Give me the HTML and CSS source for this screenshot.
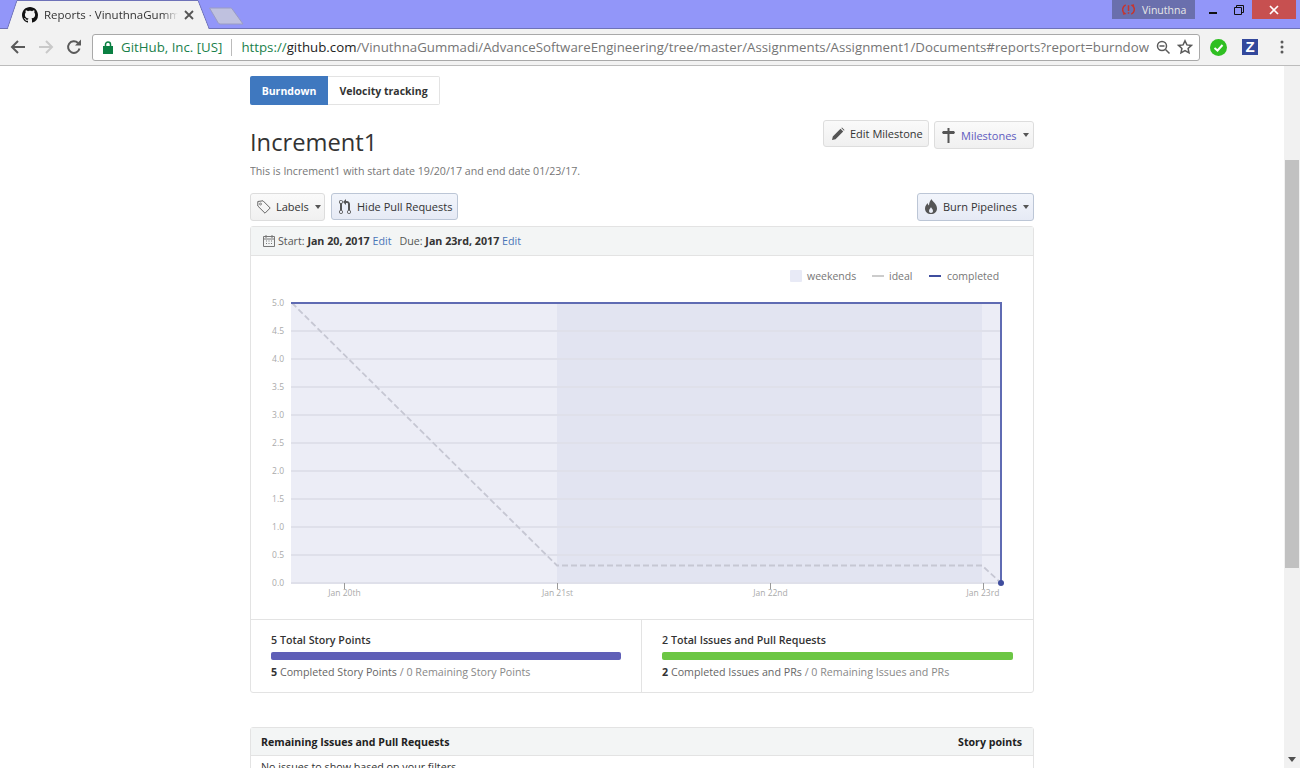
FILE: index.html
```html
<!DOCTYPE html>
<html lang="en">

<head>
    <meta charset="UTF-8">
    <meta name="viewport" content="width=device-width, initial-scale=1.0">
    <title>Reports</title>
    <link rel="stylesheet" href="styles.css">
</head>

<body>
    <!-- Browser window -->
    <header class="tabstrip">
        <div class="tab">
            <svg class="tab-shape" width="206" height="29" viewBox="0 0 206 29">
                <path d="M0 28.5h1.5L11 .5h181l11 28h3" fill="#f2f2f2" stroke="#6e72b8" />
                <path d="M2 29L11.5 1h180l11 28z" fill="#f2f2f2" />
            </svg>
            <svg class="favicon" width="16" height="16" viewBox="0 0 16 16">
                <path fill="#111" d="M8 0C3.58 0 0 3.58 0 8c0 3.54 2.29 6.53 5.47 7.59.4.07.55-.17.55-.38 0-.19-.01-.82-.01-1.49-2.01.37-2.53-.49-2.69-.94-.09-.23-.48-.94-.82-1.13-.28-.15-.68-.52-.01-.53.63-.01 1.08.58 1.23.82.72 1.21 1.87.87 2.33.66.07-.52.28-.87.51-1.07-1.78-.2-3.64-.89-3.64-3.95 0-.87.31-1.59.82-2.15-.08-.2-.36-1.02.08-2.12 0 0 .67-.21 2.2.82.64-.18 1.32-.27 2-.27.68 0 1.36.09 2 .27 1.53-1.04 2.2-.82 2.2-.82.44 1.1.16 1.92.08 2.12.51.56.82 1.27.82 2.15 0 3.07-1.87 3.75-3.65 3.95.29.25.54.73.54 1.48 0 1.07-.01 1.93-.01 2.2 0 .21.15.46.55.38A8.013 8.013 0 0016 8c0-4.42-3.58-8-8-8z" />
            </svg>
            <span class="tab-title">Reports · VinuthnaGumm</span>
            <svg class="tab-close" width="10" height="10" viewBox="0 0 10 10">
                <path d="M1 1l8 8M9 1L1 9" stroke="#555" stroke-width="1.8" />
            </svg>
        </div>
        <svg class="new-tab" width="36" height="18" viewBox="0 0 36 18">
            <path d="M.5 1h21a2 2 0 0 1 1.700 1l10.800 15H11a2 2 0 0 1-1.700-1z" fill="#bfc1df" stroke="#9a9cc4" />
        </svg>
        <div class="window-side">
            <div class="profile">
                <svg width="13" height="13" viewBox="0 0 14 14">
                    <path d="M4 2a5.500 5.500 0 0 0-1 9.500L1 12M10 12a5.500 5.500 0 0 0 1-9.500L13 2" fill="none" stroke="#c8342c" stroke-width="1.600" />
                    <path d="M7 2.500v6M7 10v1.500" stroke="#c8342c" stroke-width="1.600" />
                </svg>
                <span>Vinuthna</span>
            </div>
            <div class="win-btn">
                <svg width="10" height="10" viewBox="0 0 10 10">
                    <path d="M1 8h8" stroke="#111" stroke-width="2" />
                </svg>
            </div>
            <div class="win-btn">
                <svg width="10" height="10" viewBox="0 0 10 10">
                    <path d="M.5 2.500h7v7h-7zM2.500 2.500v-2h7v7h-2" fill="none" stroke="#111" />
                </svg>
            </div>
            <div class="win-btn win-close">
                <svg width="10" height="10" viewBox="0 0 10 10">
                    <path d="M1 1l8 8M9 1L1 9" stroke="#fff" stroke-width="1.700" />
                </svg>
            </div>
        </div>
    </header>

    <nav class="toolbar">
        <svg class="nav-icon" width="16" height="16" viewBox="0 0 16 16">
            <path d="M15 8H2M8 2L2 8l6 6" fill="none" stroke="#5a5a5a" stroke-width="2" />
        </svg>
        <svg class="nav-icon" width="16" height="16" viewBox="0 0 16 16">
            <path d="M1 8h13M8 2l6 6-6 6" fill="none" stroke="#c9c9c9" stroke-width="2" />
        </svg>
        <svg class="nav-icon" width="16" height="16" viewBox="0 0 16 16">
            <path d="M13.500 9.500A5.800 5.800 0 1 1 12 4" fill="none" stroke="#5a5a5a" stroke-width="2" />
            <path d="M9 6.500h6v-6z" fill="#5a5a5a" />
        </svg>
        <div class="omnibox">
            <svg width="10" height="13" viewBox="0 0 10 13">
                <path d="M2.500 5V3.500a2.500 2.500 0 0 1 5 0V5" fill="none" stroke="#0b8043" stroke-width="1.500" />
                <rect y="5" width="10" height="8" fill="#0b8043" />
            </svg>
            <span class="secure">GitHub, Inc. [US]</span>
            <span class="url"><span class="scheme">https://</span><span class="host">github.com</span>/VinuthnaGummadi/AdvanceSoftwareEngineering/tree/master/Assignments/Assignment1/Documents#reports?report=burndow</span>
            <svg width="15" height="15" viewBox="0 0 15 15">
                <circle cx="6" cy="6" r="4.500" fill="none" stroke="#5a5a5a" stroke-width="1.500" />
                <path d="M3.500 6h5M9.500 9.500l4 4" stroke="#5a5a5a" stroke-width="1.500" />
            </svg>
            <svg width="16" height="16" viewBox="0 0 16 16">
                <path d="M8 1.800l1.900 4.100 4.500.5-3.300 3 .9 4.400L8 11.600l-4 2.200.9-4.400-3.300-3 4.500-.5z" fill="none" stroke="#5a5a5a" stroke-width="1.500" />
            </svg>
        </div>
        <svg class="ext-check" width="17" height="17" viewBox="0 0 17 17">
            <circle cx="8.500" cy="8.500" r="8.500" fill="#2fbf22" />
            <path d="M4.500 9l3 2.500 5-5.500" fill="none" stroke="#fff" stroke-width="2" />
        </svg>
        <span class="ext-z">Z</span>
        <svg class="ext-menu" width="4" height="14" viewBox="0 0 4 14">
            <circle cx="2" cy="2" r="1.500" fill="#5a5a5a" />
            <circle cx="2" cy="7" r="1.500" fill="#5a5a5a" />
            <circle cx="2" cy="12" r="1.500" fill="#5a5a5a" />
        </svg>
    </nav>

    <!-- Page -->
    <div class="viewport">
        <main class="page">
            <div class="report-tabs">
                <a class="report-tab report-tab-active">Burndown</a>
                <a class="report-tab">Velocity tracking</a>
            </div>

            <div class="title-row">
                <h1>Increment1</h1>
                <div class="title-actions">
                    <button class="btn btn-edit">
                        <svg width="14" height="14" viewBox="0 0 14 14">
                            <path d="M1 13l.8-3.500L9.500 1.800l2.700 2.700-7.700 7.700zM10.300 1l.7-.5 2.500 2.500-.5.700z" fill="#555" />
                        </svg>
                        Edit Milestone
                    </button>
                    <button class="btn btn-milestones">
                        <svg width="13" height="15" viewBox="0 0 13 15">
                            <path d="M5.500 0h2v3H12l1 1.500L12 6H7.500v9h-2V6H1L0 4.500 1 3h4.500z" fill="#555" />
                        </svg>
                        <span class="link-text">Milestones</span>
                        <i class="caret"></i>
                    </button>
                </div>
            </div>
            <p class="description">This is Increment1 with start date 19/20/17 and end date 01/23/17.</p>

            <div class="filter-row">
                <button class="btn btn-labels">
                    <svg width="14" height="14" viewBox="0 0 14 14">
                        <path d="M.8 1.500l5.200-.7 7.200 7.200-5.200 5.200L.8 6z" fill="none" stroke="#666" />
                        <circle cx="3.500" cy="4" r="1" fill="none" stroke="#666" stroke-width=".8" />
                    </svg>
                    Labels
                    <i class="caret"></i>
                </button>
                <button class="btn btn-active btn-pulls">
                    <svg width="12" height="16" viewBox="0 0 12 16">
                        <path fill="#555" d="M11 11.280V5c-.03-.78-.34-1.470-.94-2.060C9.460 2.350 8.780 2.030 8 2H7V0L4 3l3 3V4h1c.27.02.48.11.69.31.21.2.3.42.31.69v6.280A1.993 1.993 0 0010 15a1.993 1.993 0 001-3.720zm-1 2.920c-.66 0-1.200-.55-1.200-1.200 0-.65.55-1.200 1.200-1.200.65 0 1.200.55 1.200 1.200 0 .65-.55 1.200-1.200 1.200zM4 3c0-1.110-.89-2-2-2a1.993 1.993 0 00-1 3.720v6.560A1.993 1.993 0 002 15a1.993 1.993 0 001-3.720V4.720c.59-.34 1-.98 1-1.720zm-.8 10c0 .66-.55 1.200-1.200 1.200-.65 0-1.200-.55-1.200-1.200 0-.65.55-1.200 1.200-1.200.65 0 1.200.55 1.200 1.200zM2 4.200C1.340 4.200.8 3.650.8 3c0-.65.55-1.200 1.200-1.200.65 0 1.200.55 1.200 1.200 0 .65-.55 1.200-1.200 1.200z" />
                    </svg>
                    Hide Pull Requests
                </button>
                <button class="btn btn-active btn-burn">
                    <svg width="12" height="15" viewBox="0 0 12 15">
                        <path d="M6.500 0c.5 2.500 5.500 4.500 5.500 9.500C12 13 9.500 15 6 15s-6-2-6-5.500C0 7 1.500 5.500 2.500 4c.3 1.300.8 2 1.500 2.500C4 4 5 2 6.500 0zM6 8c-.3 1.200-2 2.200-2 4 0 1.300.9 2 2 2s2-.7 2-2c0-1.800-1.700-2.800-2-4z" fill="#555" />
                    </svg>
                    Burn Pipelines
                    <i class="caret"></i>
                </button>
            </div>

            <section class="card">
                <div class="card-head dates">
                    <svg width="12" height="12" viewBox="0 0 12 12">
                        <path d="M.5 1.500h11v10H.5zM.5 4h11M3 0v3M9 0v3M3 6h1M5.500 6h1M8 6h1M3 8.500h1M5.500 8.500h1M8 8.500h1" fill="none" stroke="#777" />
                    </svg>
                    <span>Start: <b>Jan 20, 2017</b> <a>Edit</a></span>
                    <span class="due">Due: <b>Jan 23rd, 2017</b> <a>Edit</a></span>
                </div>

                <svg class="chart" width="782" height="363" viewBox="251 256 782 363">
                    <!-- legend -->
                    <rect x="790" y="270" width="12" height="12" rx="1" fill="#e8eaf6" />
                    <text class="legend" x="807" y="280">weekends</text>
                    <rect x="872" y="275" width="12" height="2" fill="#cccccc" />
                    <text class="legend" x="889" y="280">ideal</text>
                    <rect x="929" y="275" width="12" height="2" fill="#3f4d9e" />
                    <text class="legend" x="947" y="280">completed</text>

                    <!-- plot background -->
                    <rect x="291" y="303" width="710" height="280" fill="#ecedf6" />
                    <rect x="557" y="303" width="425" height="280" fill="#e2e4f1" />

                    <!-- grid -->
                    <g stroke="#dfe0ea" stroke-width="2">
                        <path d="M291 331h710" />
                        <path d="M291 359h710" />
                        <path d="M291 387h710" />
                        <path d="M291 415h710" />
                        <path d="M291 443h710" />
                        <path d="M291 471h710" />
                        <path d="M291 499h710" />
                        <path d="M291 527h710" />
                        <path d="M291 555h710" />
                        <path d="M291 583h710" />
                    </g>

                    <!-- y axis -->
                    <g class="axis">
                        <text x="284" y="306" text-anchor="end">5.0</text>
                        <text x="284" y="334" text-anchor="end">4.5</text>
                        <text x="284" y="362" text-anchor="end">4.0</text>
                        <text x="284" y="390" text-anchor="end">3.5</text>
                        <text x="284" y="418" text-anchor="end">3.0</text>
                        <text x="284" y="446" text-anchor="end">2.5</text>
                        <text x="284" y="474" text-anchor="end">2.0</text>
                        <text x="284" y="502" text-anchor="end">1.5</text>
                        <text x="284" y="530" text-anchor="end">1.0</text>
                        <text x="284" y="558" text-anchor="end">0.5</text>
                        <text x="284" y="586" text-anchor="end">0.0</text>
                    </g>

                    <!-- x axis -->
                    <g stroke="#999999">
                        <path d="M344.500 583v6" />
                        <path d="M557.500 583v6" />
                        <path d="M770.500 583v6" />
                        <path d="M983.500 583v6" />
                    </g>
                    <g class="axis">
                        <text x="344.500" y="596" text-anchor="middle">Jan 20th</text>
                        <text x="557.500" y="596" text-anchor="middle">Jan 21st</text>
                        <text x="770.500" y="596" text-anchor="middle">Jan 22nd</text>
                        <text x="983" y="596" text-anchor="middle">Jan 23rd</text>
                    </g>

                    <!-- lines -->
                    <path d="M292 303L557 565.500H982L1001 583" fill="none" stroke="#c6c7d3" stroke-width="1.800" stroke-dasharray="6 3" />
                    <path d="M291 303H1001V583" fill="none" stroke="#5f6bb3" stroke-width="2" />
                    <circle cx="1001" cy="583" r="3" fill="#3f4d9e" />
                </svg>

                <div class="stats">
                    <div class="stat">
                        <h3>5 Total Story Points</h3>
                        <div class="bar bar-story"></div>
                        <p><b>5</b> Completed Story Points <span class="muted">/ 0 Remaining Story Points</span></p>
                    </div>
                    <div class="stat">
                        <h3>2 Total Issues and Pull Requests</h3>
                        <div class="bar bar-issues"></div>
                        <p><b>2</b> Completed Issues and PRs <span class="muted">/ 0 Remaining Issues and PRs</span></p>
                    </div>
                </div>
            </section>

            <section class="card remaining">
                <div class="card-head remaining-head">
                    <span>Remaining Issues and Pull Requests</span>
                    <span>Story points</span>
                </div>
                <p class="empty">No issues to show based on your filters</p>
            </section>
        </main>

        <div class="scrollbar">
            <div class="scroll-thumb"></div>
            <i class="scroll-down"></i>
        </div>
    </div>
</body>

</html>
```

FILE: styles.css
```css
/* Global styles */

html,
body {
    margin: 0;
    height: 768px;
    overflow: hidden;
}

body {
    display: flex;
    flex-direction: column;
    font-family: "Open Sans", "Noto Sans", sans-serif;
    font-size: 11px;
    color: #333;
    background-color: #fff;
}

/* Browser window */

.tabstrip {
    display: flex;
    height: 29px;
    background-color: #9296f9;
    box-sizing: border-box;
    border-bottom: 1px solid #6e72b8;
    flex-shrink: 0;
}

.tab {
    position: relative;
    width: 206px;
    height: 29px;
    margin-left: 6px;
    display: flex;
    align-items: center;
    padding: 0 0 0 16px;
    box-sizing: border-box;
}

.tab-shape {
    position: absolute;
    left: 0;
    top: 0;
}

.favicon,
.tab-title,
.tab-close {
    position: relative;
}

.tab-title {
    margin-left: 6px;
    width: 134px;
    white-space: nowrap;
    font-size: 11.5px;
    color: #333;
    -webkit-mask-image: linear-gradient(to right, #000 88%, transparent);
    mask-image: linear-gradient(to right, #000 88%, transparent);
}

.tab-close {
    margin-left: 6px;
}

.new-tab {
    margin: 7px 0 0 -3px;
}

.window-side {
    margin-left: auto;
    display: flex;
    align-items: flex-start;
    height: 19px;
    padding-right: 4px;
}

.profile {
    width: 83px;
    height: 19px;
    margin-right: 5px;
    display: flex;
    align-items: center;
    gap: 7px;
    padding-left: 10px;
    box-sizing: border-box;
    background-color: #6a6fad;
    font-size: 10.5px;
    color: #e8e8e8;
}

.win-btn {
    width: 26px;
    height: 19px;
    display: flex;
    align-items: center;
    justify-content: center;
}

.win-close {
    width: 44px;
    background-color: #c75050;
}

.toolbar {
    height: 37px;
    flex-shrink: 0;
    box-sizing: border-box;
    display: flex;
    align-items: center;
    padding: 0 10px;
    background-color: #f2f2f2;
    border-bottom: 1px solid #bcbcbc;
}

.nav-icon {
    margin-right: 12px;
}

.omnibox {
    width: 1108px;
    height: 27px;
    margin: 0 0 0 -2px;
    padding: 0 6px 0 10px;
    box-sizing: border-box;
    display: flex;
    align-items: center;
    gap: 6px;
    background-color: #fff;
    border: 1px solid #a9a9a9;
    border-radius: 3px;
    font-size: 13.28px;
    white-space: nowrap;
}

.secure {
    margin-left: 2px;
    padding-right: 9px;
    border-right: 1px solid #bbb;
    line-height: 17px;
    color: #1a7f4b;
}

.url {
    flex: 1;
    margin-left: 3px;
    color: #757575;
}

.scheme {
    color: #1a7f4b;
}

.host {
    color: #222;
}

.ext-check {
    margin-left: 10px;
}

.ext-z {
    width: 16px;
    height: 16px;
    margin-left: 15px;
    background-color: #33489c;
    color: #fff;
    font-family: "Liberation Sans", Arial, sans-serif;
    font-size: 15px;
    font-weight: bold;
    line-height: 16px;
    text-align: center;
}

.ext-menu {
    margin-left: 22px;
}

/* Page */

.viewport {
    flex: 1;
    display: flex;
    min-height: 0;
}

.page {
    width: 784px;
    margin-left: 250px;
    padding-top: 10px;
    overflow: hidden;
}

.scrollbar {
    width: 16px;
    margin-left: auto;
    background-color: #f1f1f1;
    display: flex;
    flex-direction: column;
    align-items: center;
}

.scroll-thumb {
    width: 14px;
    height: 408px;
    margin-top: 94px;
    background-color: #c1c1c1;
}

.scroll-down {
    margin-top: auto;
    margin-bottom: 6px;
    border-top: 5px solid #505050;
    border-left: 4px solid transparent;
    border-right: 4px solid transparent;
}

/* Report tabs */

.report-tabs {
    display: flex;
    height: 29px;
}

.report-tab {
    display: flex;
    align-items: center;
    justify-content: center;
    width: 112px;
    box-sizing: border-box;
    border: 1px solid #e3e3e3;
    border-left: 0;
    border-radius: 0 2px 2px 0;
    font-size: 10.5px;
    font-weight: 700;
    color: #333;
}

.report-tab-active {
    width: 78px;
    border: 0;
    border-radius: 2px 0 0 2px;
    background-color: #3f78bf;
    color: #fff;
}

/* Title */

.title-row {
    display: flex;
    justify-content: space-between;
    margin-top: 15px;
    height: 32px;
}

h1 {
    margin: 0;
    font-size: 23.7px;
    font-weight: 400;
    line-height: 44px;
    color: #333;
}

.title-actions {
    display: flex;
    align-items: flex-start;
    gap: 5px;
}

.description {
    margin: 11px 0 0;
    font-size: 10.63px;
    line-height: 16px;
    color: #767676;
}

/* Buttons */

.btn {
    display: inline-flex;
    align-items: center;
    height: 28px;
    padding: 0 0 0 6px;
    box-sizing: border-box;
    border: 1px solid #ddd;
    border-radius: 3px;
    background: linear-gradient(#fafafa, #f0f0f0);
    font-family: inherit;
    font-size: 11px;
    color: #333;
    white-space: nowrap;
}

.btn svg {
    flex-shrink: 0;
    margin-right: 5px;
}

.btn-edit {
    width: 106px;
    height: 27px;
    padding-left: 7px;
}

.btn-edit svg {
    margin-right: 5px;
}

.btn-milestones {
    width: 100px;
    margin-top: 1px;
    padding-left: 7px;
}

.btn-milestones svg {
    margin-right: 6px;
}

.link-text {
    color: #5f5cc0;
}

.caret {
    margin-left: 6px;
    border-top: 4px solid #555;
    border-left: 3px solid transparent;
    border-right: 3px solid transparent;
}

.btn-active {
    background: linear-gradient(#f2f5fb, #e6eaf5);
    border-color: #bcc6d6;
}

.filter-row {
    display: flex;
    align-items: flex-start;
    gap: 6px;
    margin-top: 14px;
}

.btn-labels {
    width: 75px;
    padding-bottom: 1px;
}

.btn-pulls {
    width: 127px;
    height: 27px;
    padding-left: 7px;
}

.btn-pulls svg {
    margin-right: 6px;
}

.btn-burn {
    width: 117px;
    margin-left: auto;
    padding-left: 7px;
    padding-bottom: 1px;
}

.btn-burn svg {
    margin-right: 6px;
}

/* Cards */

.card {
    margin-top: 5px;
    border: 1px solid #e3e3e3;
    border-radius: 3px;
    background-color: #fff;
}

.card-head {
    height: 29px;
    box-sizing: border-box;
    display: flex;
    align-items: center;
    background-color: #f3f5f5;
    border-bottom: 1px solid #e3e3e3;
}

.dates {
    gap: 3px;
    padding-left: 12px;
    font-size: 10.7px;
    color: #555;
}

.dates b {
    color: #333;
}

.dates a {
    color: #4a76b8;
}

.due {
    margin-left: 5px;
}

.chart {
    display: block;
}

.legend {
    font-size: 10.5px;
    fill: #777;
}

.axis text {
    font-size: 8.5px;
    fill: #aaa;
}

.stats {
    display: grid;
    grid-template-columns: 390px 1fr;
    height: 72px;
    border-top: 1px solid #e3e3e3;
}

.stat {
    padding: 12px 20px 0;
    box-sizing: border-box;
}

.stat + .stat {
    border-left: 1px solid #e3e3e3;
}

.stat h3 {
    margin: 0;
    font-size: 10.7px;
    font-weight: 600;
    line-height: 16px;
    color: #333;
}

.stat p {
    margin: 4px 0 0;
    font-size: 10.7px;
    line-height: 16px;
    color: #666;
}

.stat p b {
    color: #333;
}

.muted {
    color: #888;
}

.bar {
    height: 8px;
    margin-top: 4px;
    border-radius: 2px;
}

.bar-story {
    background-color: #5f5fb7;
}

.bar-issues {
    background-color: #6cc644;
}

.remaining {
    margin-top: 34px;
}

.remaining-head {
    height: 28px;
    justify-content: space-between;
    padding: 0 11px 0 10px;
    font-size: 10.6px;
    font-weight: 700;
    color: #222;
}

.empty {
    margin: 4px 10px;
    font-size: 10.7px;
}
```
